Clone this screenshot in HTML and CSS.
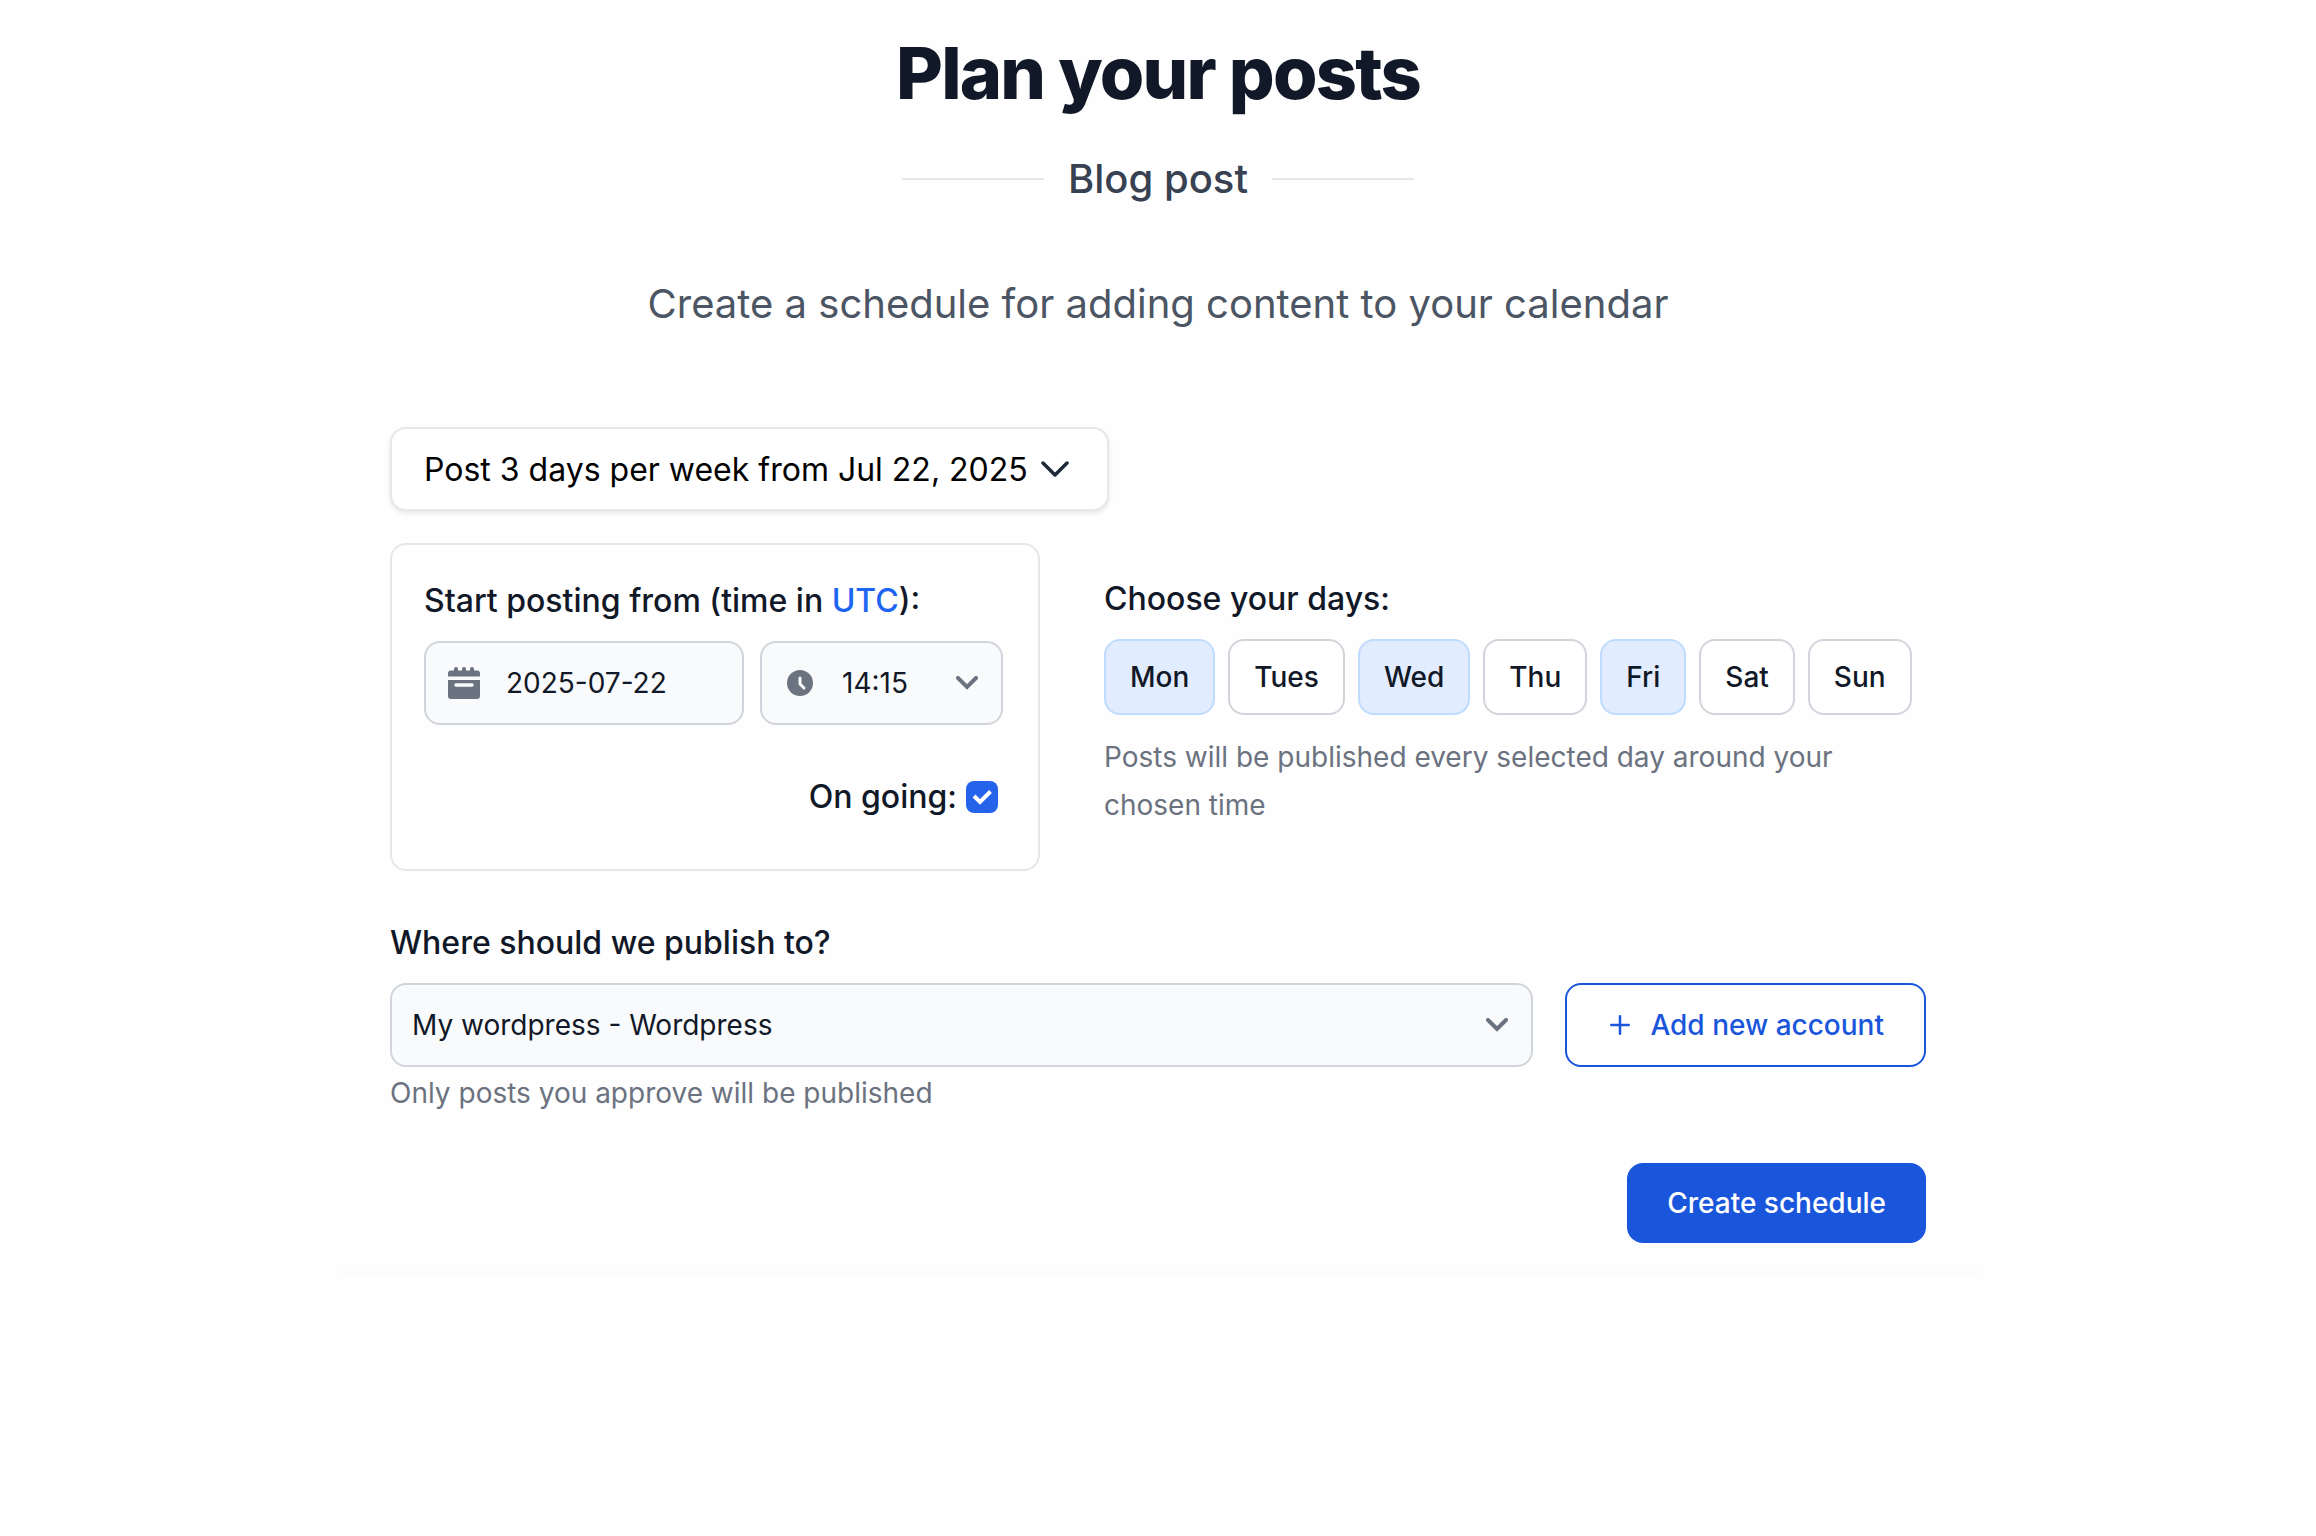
FILE: index.html
```html
<!DOCTYPE html>
<html lang="en">
<head>
    <meta charset="UTF-8">
    <meta name="viewport" content="width=device-width, initial-scale=1.0">
    <title>Plan your posts</title>
    <link rel="stylesheet" href="styles.css">
</head>

<body>
    <main class="container">
        <header>
            <h1>Plan your posts</h1>
            <div class="divider"><span>Blog post</span></div>
            <p class="subtitle">Create a schedule for adding content to your calendar</p>
        </header>

        <form class="schedule-form">
            <button type="button" class="summary">
                Post 3 days per week from Jul 22, 2025
                <svg width="28" height="16" viewBox="0 0 28 16" fill="none" stroke="#1f2937" stroke-width="3.500" stroke-linecap="round" stroke-linejoin="round"><path d="M2 2l12 12L26 2"/></svg>
            </button>

            <div class="options">
                <section class="start-card">
                    <label class="label" for="start-date">Start posting from (time in <a href="#">UTC</a>):</label>
                    <div class="fields">
                        <div class="field date-field">
                            <svg width="32" height="32" viewBox="0 0 32 32"><path d="M0 13h32v16a3 3 0 0 1-3 3H3a3 3 0 0 1-3-3zM0 9.500V6.500a3 3 0 0 1 3-3h26a3 3 0 0 1 3 3v3z" fill="#6b7280"/><path d="M8 2v4M16 2v4M24 2v4" stroke="#6b7280" stroke-width="4" stroke-linecap="round"/><path d="M8 18h16" stroke="#f9fafb" stroke-width="3.500" stroke-linecap="round"/></svg>
                            <input type="text" id="start-date" value="2025-07-22">
                        </div>
                        <div class="field time-field">
                            <svg width="26" height="26" viewBox="0 0 26 26"><circle cx="13" cy="13" r="13" fill="#6b7280"/><path d="M13 8v6l4 4" fill="none" stroke="#f9fafb" stroke-width="3" stroke-linecap="round" stroke-linejoin="round"/></svg>
                            <select id="start-time" aria-label="Time">
                                <option>14:15</option>
                            </select>
                            <svg class="arrow" width="22" height="14" viewBox="0 0 22 14" fill="none" stroke="#6b7280" stroke-width="4" stroke-linecap="round"><path d="M2 2l9 9 9-9"/></svg>
                        </div>
                    </div>
                    <div class="ongoing">
                        <label class="label" for="ongoing">On going:</label>
                        <span class="check">
                            <input type="checkbox" id="ongoing" checked>
                            <svg width="32" height="32" viewBox="0 0 32 32" fill="none" stroke="#fff" stroke-width="4"><path d="M8 15l6 6L24.500 10.500"/></svg>
                        </span>
                    </div>
                </section>

                <section class="days">
                    <h2 class="label">Choose your days:</h2>
                    <div class="day-list">
                        <button type="button" class="day selected">Mon</button>
                        <button type="button" class="day">Tues</button>
                        <button type="button" class="day selected">Wed</button>
                        <button type="button" class="day">Thu</button>
                        <button type="button" class="day selected">Fri</button>
                        <button type="button" class="day">Sat</button>
                        <button type="button" class="day">Sun</button>
                    </div>
                    <p class="hint">Posts will be published every selected day around your chosen time</p>
                </section>
            </div>

            <section class="publish">
                <label class="label" for="account">Where should we publish to?</label>
                <div class="publish-row">
                    <div class="field account-field">
                        <select id="account">
                            <option>My wordpress - Wordpress</option>
                        </select>
                        <svg class="arrow" width="22" height="14" viewBox="0 0 22 14" fill="none" stroke="#6b7280" stroke-width="4" stroke-linecap="round"><path d="M2 2l9 9 9-9"/></svg>
                    </div>
                    <button type="button" class="add-account">
                        <svg width="20" height="20" viewBox="0 0 20 20" fill="none" stroke="#1a56db" stroke-width="2.500" stroke-linecap="round"><path d="M10 1.250v17.500M1.250 10h17.500"/></svg>
                        Add new account
                    </button>
                </div>
                <p class="hint approve">Only posts you approve will be published</p>
            </section>

            <button type="submit" class="submit">Create schedule</button>
        </form>
    </main>
</body>
</html>
```
FILE: styles.css
```css
* {
    box-sizing: border-box;
}

body {
    margin: 0;
    font-family: Inter, "Liberation Sans", sans-serif;
    font-size: 28px;
    color: #111827;
    background-color: #fefefe;
}

h1, h2, p {
    margin: 0;
}

button, input, select {
    font-family: inherit;
    font-size: 28px;
    color: inherit;
}

button {
    cursor: pointer;
}

svg {
    display: block;
    flex-shrink: 0;
}

.container {
    max-width: 1640px;
    margin: 0 auto;
    padding: 33px 52px 32px;
    background: linear-gradient(to top, #fcfcfc, #fefefe 12px);
}

header {
    display: flex;
    flex-direction: column;
    align-items: center;
    text-align: center;
}

h1 {
    font-size: 72px;
    font-weight: 800;
    line-height: 80px;
    letter-spacing: -0.025em;
}

.divider {
    display: flex;
    align-items: center;
    gap: 24px;
    margin-top: 36px;
    font-size: 40px;
    font-weight: 500;
    line-height: 60px;
    color: #374151;
}

.divider::before,
.divider::after {
    content: "";
    width: 142px;
    height: 2px;
    background-color: #e5e7eb;
}

.subtitle {
    margin-top: 65px;
    font-size: 40px;
    line-height: 60px;
    color: #4b5563;
}

.schedule-form {
    display: flex;
    flex-direction: column;
    margin-top: 93px;
}

.summary {
    display: flex;
    align-items: center;
    align-self: flex-start;
    gap: 13px;
    height: 84px;
    padding: 0 38px 0 32px;
    font-size: 32px;
    color: #000;
    background-color: #fff;
    border: 2px solid #e5e7eb;
    border-radius: 16px;
    box-shadow: 0 2px 4px rgba(0,0,0,0.1);
}

.options {
    display: flex;
    align-items: flex-start;
    gap: 64px;
    margin-top: 32px;
}

.label {
    display: block;
    font-size: 32px;
    font-weight: 500;
    line-height: 48px;
}

.label a {
    color: #1c64f2;
    text-decoration: none;
}

.start-card {
    width: 650px;
    padding: 32px 35px 28px 32px;
    border: 2px solid #e5e7eb;
    border-radius: 16px;
}

.fields {
    display: flex;
    gap: 16px;
    margin-top: 16px;
}

.field {
    display: flex;
    align-items: center;
    height: 84px;
    background-color: #f9fafb;
    border: 2px solid #d1d5db;
    border-radius: 16px;
}

.field input,
.field select {
    flex: 1;
    min-width: 0;
    height: 100%;
    padding: 0;
    border: none;
    outline: none;
    background: transparent;
    appearance: none;
}

.date-field {
    width: 320px;
    gap: 26px;
    padding-left: 22px;
}

.time-field {
    flex: 1;
    gap: 29px;
    padding: 0 23px 0 25px;
}

.arrow {
    pointer-events: none;
}

.ongoing {
    display: flex;
    align-items: center;
    justify-content: flex-end;
    gap: 9px;
    margin: 48px 5px 20px 0;
}

.check {
    display: grid;
}

.check input,
.check svg {
    grid-area: 1 / 1;
}

.check input {
    width: 32px;
    height: 32px;
    margin: 0;
    appearance: none;
    background-color: #2563eb;
    border-radius: 8px;
}

.check svg {
    z-index: 1;
    pointer-events: none;
}

.days {
    flex: 1;
    padding-top: 32px;
}

.day-list {
    display: flex;
    gap: 13px;
    margin-top: 16px;
}

.day {
    height: 76px;
    padding: 0 24px;
    font-weight: 500;
    background-color: #fff;
    border: 2px solid #d1d5db;
    border-radius: 16px;
}

.day.selected {
    background-color: #e1ecff;
    border-color: #bfdbfe;
}

.hint {
    line-height: 48px;
    color: #6b7280;
}

.days .hint {
    margin-top: 18px;
}

.publish {
    margin-top: 48px;
}

.publish-row {
    display: flex;
    gap: 32px;
    margin-top: 16px;
}

.account-field {
    flex: 1;
    padding: 0 23px 0 20px;
}

.add-account {
    display: flex;
    align-items: center;
    gap: 20px;
    height: 84px;
    padding: 0 40px 0 43px;
    font-weight: 500;
    color: #1a56db;
    background-color: #fff;
    border: 2px solid #1a56db;
    border-radius: 16px;
}

.approve {
    margin-top: 2px;
}

.submit {
    align-self: flex-end;
    height: 80px;
    margin-top: 46px;
    padding: 0 40px;
    font-weight: 500;
    color: #fff;
    background-color: #1a56db;
    border: none;
    border-radius: 16px;
}
```
